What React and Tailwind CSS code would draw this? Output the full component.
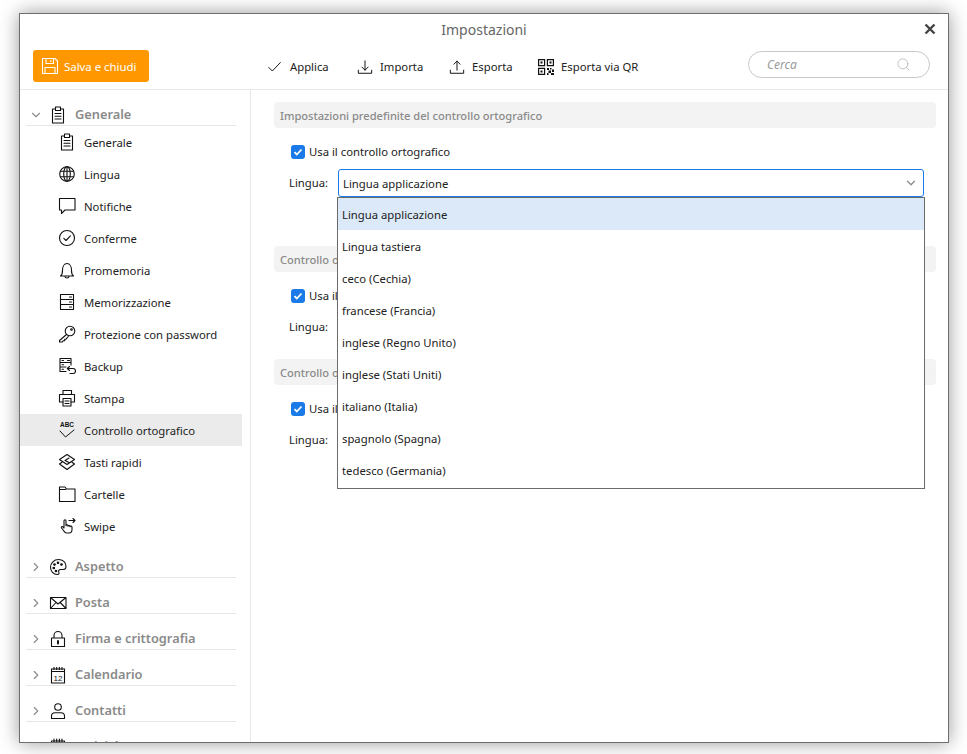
import { ChevronDown, ChevronRight, Search } from "lucide-react";

const S = ({ children, size = 18, w = 1.1 }) => (
  <svg width={size} height={size} viewBox="0 0 18 18" fill="none" stroke="#111" strokeWidth={w} strokeLinecap="round" strokeLinejoin="round">
    {children}
  </svg>
);

const ClipboardIcon = () => (
  <S>
    <path d="M6 3H3.500v14h11V3H12" />
    <path d="M6.500 1h5v3.500h-5zM6 7.500h6M6 10.200h6M6 13h6" />
  </S>
);
const GlobeIcon = () => (
  <S>
    <circle cx="9" cy="9" r="7.300" />
    <ellipse cx="9" cy="9" rx="3.300" ry="7.300" />
    <path d="M9 1.700v14.600M2.500 6.300h13M2.500 11.700h13" />
  </S>
);
const BubbleIcon = () => (
  <S>
    <path d="M1.500 1.500h15.500v11.500H7l-3.500 3.500V13h-2z" />
  </S>
);
const CheckCircleIcon = () => (
  <S>
    <circle cx="9" cy="9" r="7.500" />
    <path d="M5.800 9.300l2.200 2.200 4.400-4.600" />
  </S>
);
const BellIcon = () => (
  <S>
    <path d="M2.500 15c1.500-1 2-2.500 2-5.500 0-4 1.800-7 4.500-7s4.500 3 4.500 7c0 3 .5 4.500 2 5.500z" />
    <path d="M7 15.500c0 1 1 1.500 2 1.500s2-.5 2-1.500" />
  </S>
);
const StorageIcon = () => (
  <S>
    <path d="M2.500 1.500h13v15h-13zM2.500 6.500h13M2.500 11.500h13M11.500 4h2M11.500 9h2M11.500 14h2" />
  </S>
);
const KeyIcon = () => (
  <S>
    <circle cx="12" cy="6" r="4.800" />
    <circle cx="13.500" cy="4.500" r=".8" />
    <path d="M8.500 9.500L1.500 15.500v1.500h2.800l1-1.300h1.400v-1.400l1.300-.1 2.300-2.700" />
  </S>
);
const BackupIcon = () => (
  <S>
    <path d="M8 14.500H2V1.500h11V8M2 5.500h11M2 10h6M9.500 3.500h2M4 3.500h1.500M4 7.800h1.500M4 12.200h1.500" />
    <path d="M9.500 11.500h5.500a2.500 2.500 0 0 1 0 5h-3M11.500 9.500l-2.200 2 2.200 2" />
  </S>
);
const PrintIcon = () => (
  <S>
    <path d="M5 5V1.500h8.500V5M5 13H1.500V5.500h15V13H13" />
    <path d="M5 9.500h8v7.500H5zM7 12h4M7 14.500h4" />
  </S>
);
const SpellIcon = () => (
  <svg width="18" height="18" viewBox="0 0 18 18" fill="none" stroke="#111" strokeWidth="1" strokeLinecap="round" strokeLinejoin="round">
    <text x="9" y="6" textAnchor="middle" fontSize="6.500" fontWeight="700" fill="#111" stroke="none" fontFamily="Liberation Sans, sans-serif">ABC</text>
    <path d="M2 10l5.500 6L16 9" />
  </svg>
);
const ShortcutIcon = () => (
  <S>
    <path d="M9 1.500l7.500 5-7.500 5-7.500-5z" />
    <path d="M4 9.200L1.500 11 9 16.500l7.500-5.500L14 9.200M11 5L7 7.500l4 2" />
  </S>
);
const FolderIcon = () => (
  <S>
    <path d="M1.500 2h5.500l1.500 2h8.500v12.500h-15.500z" />
    <path d="M7.500 4.500h-6" />
  </S>
);
const SwipeIcon = () => (
  <S>
    <path d="M6 10.500V3.800a1 1 0 0 1 2 0v5M8 8.500c0-1 2-1 2 0v.7c0-1 2-1 2 0v.5c0-.8 2-.8 2 .3v2.500c0 2-1 3.500-3 3.500H8.500c-1.500 0-2-1-3-2.500L3.500 11c-.6-1 .6-2 1.500-1l1 1" />
    <path d="M11 3.500h6M15 1.500l2 2-2 2" />
  </S>
);
const PaletteIcon = () => (
  <S>
    <path d="M9.500 1.500C5 1.500 1.500 5 1.500 9.300c0 4.200 3 7.200 6.800 7.200 1.800 0 2-1.300 1.500-2.300-.6-1.300.2-2.700 1.800-2.700h2.400c2 0 3-1.300 3-3.300 0-3.800-3.300-6.700-7.500-6.700z" />
    <circle cx="5.500" cy="6.500" r=".8" fill="#111" />
    <circle cx="9" cy="4.800" r=".8" fill="#111" />
    <circle cx="4.800" cy="10" r=".8" fill="#111" />
    <circle cx="7" cy="13" r=".8" fill="#111" />
    <circle cx="12.500" cy="6.500" r=".8" fill="#111" />
  </S>
);
const MailIcon = () => (
  <S>
    <path d="M1.500 3.500h15.500v11h-15.500zM1.500 3.500L9 10l8-6.500M1.500 14.500l5.500-6M17 14.500l-5.800-6" />
  </S>
);
const LockIcon = () => (
  <S>
    <path d="M2.500 8h13v8.500h-13zM5 8V5.500a4 4 0 0 1 8 0V8" />
    <path d="M9 11v2.500" strokeWidth="2" />
  </S>
);
const CalendarIcon = () => (
  <svg width="18" height="18" viewBox="0 0 18 18" fill="none" stroke="#111" strokeWidth="1.100">
    <path d="M2.500 3h13v14h-13zM2.500 5.500h13M5 1v3M7.700 1v3M10.400 1v3M13 1v3" />
    <text x="9" y="14.500" textAnchor="middle" fontSize="8" fill="#111" stroke="none" fontFamily="Liberation Sans, sans-serif">12</text>
  </svg>
);
const PersonIcon = () => (
  <S>
    <circle cx="9" cy="5" r="3.300" />
    <path d="M2.500 16.500v-2.500c0-2 1.500-3.300 3.500-3.300h6c2 0 3.500 1.300 3.500 3.300v2.500z" />
  </S>
);
const ActivityIcon = () => (
  <S>
    <path d="M2.500 3h13v14h-13zM2.500 5.500h13M5 1v3M7.700 1v3M10.400 1v3M13 1v3" />
  </S>
);
const SaveIcon = () => (
  <svg width="18" height="18" viewBox="0 0 18 18" fill="none" stroke="#fff" strokeWidth="1.100" strokeLinejoin="round">
    <path d="M1.500 1.500h12.500l2.500 2.500v12.500h-15z" />
    <path d="M5 1.500v5h7.500v-5M9.800 3v2M4 16.500v-6h10v6" />
  </svg>
);
const ApplyIcon = () => (
  <S size={16}><path d="M2 9.500l4 4L15 4" /></S>
);
const ImportIcon = () => (
  <S size={17}><path d="M1.500 12v3.500h15V12M9 1.500v10.500M5.500 8.500L9 12l3.500-3.500" /></S>
);
const ExportIcon = () => (
  <S size={17}><path d="M1.500 12v3.500h15V12M9 12V1.800M5.500 5.300L9 1.800l3.500 3.500" /></S>
);
const QrIcon = () => (
  <svg width="16" height="16" viewBox="0 0 16 16" fill="none" stroke="#111" strokeWidth="1.200">
    <path d="M.6.600h6v6h-6zM9.400.600h6v6h-6zM.6 9.400h6v6h-6z" />
    <path d="M2.500 2.500h2v2h-2zM11.500 2.500h2v2h-2zM2.500 11.500h2v2h-2z" fill="#111" stroke="none" />
    <path d="M9 9h2v2H9zM12 9h1.500v1.500H12zM14 10.500h2V13h-2zM10.500 11.500H13V14h-2.500zM9 14h1.500v2H9zM13 14h3v2h-3z" fill="#111" stroke="none" />
  </svg>
);

const subItems = [
  ["Generale", ClipboardIcon],
  ["Lingua", GlobeIcon],
  ["Notifiche", BubbleIcon],
  ["Conferme", CheckCircleIcon],
  ["Promemoria", BellIcon],
  ["Memorizzazione", StorageIcon],
  ["Protezione con password", KeyIcon],
  ["Backup", BackupIcon],
  ["Stampa", PrintIcon],
  ["Controllo ortografico", SpellIcon],
  ["Tasti rapidi", ShortcutIcon],
  ["Cartelle", FolderIcon],
  ["Swipe", SwipeIcon],
];

const groups = [
  ["Aspetto", PaletteIcon],
  ["Posta", MailIcon],
  ["Firma e crittografia", LockIcon],
  ["Calendario", CalendarIcon],
  ["Contatti", PersonIcon],
  ["Attività", ActivityIcon],
];

const languages = [
  "Lingua applicazione",
  "Lingua tastiera",
  "ceco (Cechia)",
  "francese (Francia)",
  "inglese (Regno Unito)",
  "inglese (Stati Uniti)",
  "italiano (Italia)",
  "spagnolo (Spagna)",
  "tedesco (Germania)",
];

const tools = [
  ["Applica", ApplyIcon, "w-[40px]"],
  ["Importa", ImportIcon, "w-[42px]"],
  ["Esporta", ExportIcon, "w-[39px]"],
  ["Esporta via QR", QrIcon, "w-[76px]"],
];

function GroupRow({ label, Icon, open }) {
  return (
    <div className="ml-[6px] flex h-[36px] w-[210px] shrink-0 items-end border-b border-[#e6e6e6]">
      <div className="flex h-[20px] items-center">
        <span className="flex w-[20px] justify-center">
          {open ? (
            <ChevronDown size={14} color="#8c8c8c" />
          ) : (
            <ChevronRight size={14} color="#8c8c8c" />
          )}
        </span>
        <span className="ml-[3px] flex w-[18px] justify-center">
          <Icon />
        </span>
        <span className="ml-[8px] text-[12.8px] font-semibold text-[#8a8a8a]">{label}</span>
      </div>
    </div>
  );
}

function Section({ title, children }) {
  return (
    <div>
      <div className="flex h-[26px] items-center rounded-[4px] bg-[#f3f3f3] px-[6px] pt-[2px] text-[11.1px] font-medium text-[#8a8a8a]">
        {title}
      </div>
      <div className="mt-[15px] ml-[17px] flex h-[18px] items-center">
        <span className="flex h-[14px] w-[14px] items-center justify-center rounded-[3px] bg-[#1a7ae8]">
          <svg width="10" height="10" viewBox="0 0 10 10" fill="none" stroke="#fff" strokeWidth="1.800">
            <path d="M1.500 5.200l2.300 2.300 4.700-5" />
          </svg>
        </span>
        <span className="ml-[4px] pt-[1px] text-[11.3px] text-[#222]">Usa il controllo ortografico</span>
      </div>
      <div className="mt-[8px] ml-[15px] flex h-[28px] items-center">
        <span className="w-[49px] pt-[1px] text-[11.3px] text-[#222]">Lingua:</span>
        {children}
      </div>
    </div>
  );
}

function Select({ open }) {
  return (
    <div className="relative w-[586px]">
      <div className="flex h-[28px] items-center justify-between rounded-[3px] border border-[#1a7ae8] bg-white pr-[5px] pl-[4px] text-[11.3px] text-[#222]">
        <span className="pt-[2px]">Lingua applicazione</span>
        <ChevronDown size={14} color="#8c8c8c" strokeWidth={2.200} />
      </div>
      {open && (
        <div className="absolute top-[28px] -left-[1px] z-10 w-[588px] border border-[#6b6b6b] bg-white pb-[2px]">
          {languages.map((l, i) => (
            <div
              key={l}
              className={`flex h-[32px] items-center pt-[2px] pl-[4px] text-[11.3px] text-[#222] ${i === 0 ? "bg-[#dbe9f9]" : ""}`}
            >
              {l}
            </div>
          ))}
        </div>
      )}
    </div>
  );
}

export default function App() {
  return (
    <div
      className="h-screen overflow-hidden bg-white pt-[13px] pl-[19px]"
      style={{ fontFamily: '"Noto Sans", "Open Sans", sans-serif' }}
    >
      <div className="relative flex h-[730px] w-[930px] flex-col overflow-hidden border border-[#6e6e6e] bg-white shadow-[0_0_18px_rgba(0,0,0,0.4)]">
        {/* header */}
        <div className="shrink-0 border-b border-[#e8e8e8]">
          <div className="relative flex h-[32px] items-center justify-center pb-[1px] text-[14px] text-[#666]">
            Impostazioni
            <svg className="absolute top-[9px] right-[12px]" width="12" height="12" viewBox="0 0 12 12" stroke="#444" strokeWidth="2.400">
              <path d="M1.500 1.500l9 9M10.500 1.500l-9 9" />
            </svg>
          </div>
          <div className="flex h-[43px] items-start pt-[4px] pl-[13px]">
            <button className="flex h-[32px] w-[116px] items-center rounded-[3px] bg-[#ff9800] pl-[8px] text-[11.4px] text-white">
              <SaveIcon />
              <span className="ml-[5px] pt-[1px]">Salva e chiudi</span>
            </button>
            <div className="mt-[1px] ml-[118px] flex h-[32px] items-center gap-[27px]">
              {tools.map(([label, Icon, w]) => (
                <div key={label} className="flex items-center">
                  <span className="flex w-[16px] justify-center">
                    <Icon />
                  </span>
                  <span className={`ml-[7px] text-[11.3px] whitespace-nowrap text-[#222] ${w}`}>{label}</span>
                </div>
              ))}
            </div>
            <div className="mt-[1px] mr-[18px] ml-auto flex h-[27px] w-[182px] items-center justify-between rounded-full border border-[#c8c8c8] pr-[18px] pl-[18px]">
              <span className="text-[12px] text-[#9a9a9a] italic">Cerca</span>
              <Search size={15} color="#aaaaaa" strokeWidth={1.100} />
            </div>
          </div>
        </div>

        <div className="flex min-h-0 flex-1">
          {/* sidebar */}
          <div className="flex w-[231px] shrink-0 flex-col overflow-hidden border-r border-[#e8e8e8]">
            <GroupRow label="Generale" Icon={ClipboardIcon} open />
            <div className="w-[222px]">
              {subItems.map(([label, Icon]) => (
                <div
                  key={label}
                  className={`flex h-[32px] items-center pl-[38px] ${label === "Controllo ortografico" ? "bg-[#ebebeb]" : ""}`}
                >
                  <span className="flex w-[18px] justify-center">
                    <Icon />
                  </span>
                  <span className="ml-[8px] pt-[2px] text-[11.3px] text-[#222]">{label}</span>
                </div>
              ))}
            </div>
            {groups.map(([label, Icon]) => (
              <GroupRow key={label} label={label} Icon={Icon} />
            ))}
          </div>

          {/* main */}
          <div className="min-w-0 flex-1 px-[12px] pt-[12px] pl-[23px]">
            <div className="h-[144px]">
              <Section title="Impostazioni predefinite del controllo ortografico">
                <Select open />
              </Section>
            </div>
            <div className="h-[113px]">
              <Section title="Controllo ortografico della posta">
                <Select />
              </Section>
            </div>
            <div className="h-[113px]">
              <Section title="Controllo ortografico delle note">
                <Select />
              </Section>
            </div>
          </div>
        </div>
      </div>
    </div>
  );
}
